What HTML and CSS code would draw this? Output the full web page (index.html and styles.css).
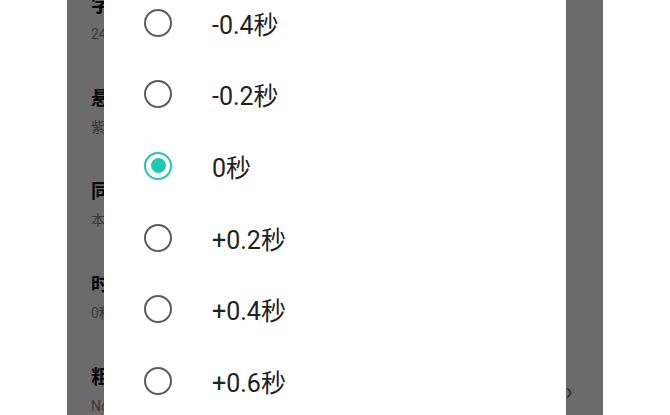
FILE: index.html
```html
<!DOCTYPE html>
<html lang="zh-CN">
<head>
    <meta charset="UTF-8">
    <meta name="viewport" content="width=device-width, initial-scale=1.0">
    <title>字幕设置</title>
    <link rel="stylesheet" href="styles.css">
</head>
<body>
    <div class="phone">
        <!-- settings list behind the dialog -->
        <ul class="settings">
            <li class="setting">
                <div class="setting-text">
                    <span class="setting-title">字幕大小</span>
                    <span class="setting-sub">24</span>
                </div>
            </li>
            <li class="setting">
                <div class="setting-text">
                    <span class="setting-title">悬浮字幕颜色</span>
                    <span class="setting-sub">紫色</span>
                </div>
            </li>
            <li class="setting">
                <div class="setting-text">
                    <span class="setting-title">同步字幕</span>
                    <span class="setting-sub">本地字幕</span>
                </div>
            </li>
            <li class="setting">
                <div class="setting-text">
                    <span class="setting-title">时间偏移</span>
                    <span class="setting-sub">0秒</span>
                </div>
            </li>
            <li class="setting">
                <div class="setting-text">
                    <span class="setting-title">粗体</span>
                    <span class="setting-sub">None</span>
                </div>
                <span class="chevron">&rsaquo;</span>
            </li>
        </ul>

        <div class="overlay"></div>

        <!-- offset picker -->
        <div class="dialog">
            <ul class="options">
                <li class="option"><span class="radio"></span><span class="option-label">-0.4秒</span></li>
                <li class="option"><span class="radio"></span><span class="option-label">-0.2秒</span></li>
                <li class="option"><span class="radio checked"></span><span class="option-label">0秒</span></li>
                <li class="option"><span class="radio"></span><span class="option-label">+0.2秒</span></li>
                <li class="option"><span class="radio"></span><span class="option-label">+0.4秒</span></li>
                <li class="option"><span class="radio"></span><span class="option-label">+0.6秒</span></li>
            </ul>
        </div>
    </div>
</body>
</html>
```

FILE: styles.css
```css
body {
    margin: 0;
    background-color: #fff;
    font-family: Roboto, "Noto Sans CJK SC", sans-serif;
}

.phone {
    position: relative;
    width: 536px;
    height: 415px;
    margin: 0 auto;
    overflow: hidden;
    background-color: #fff;
}

/* Settings list */
.settings {
    list-style: none;
    margin: -28px 0 0;
    padding: 0;
}

.setting {
    display: flex;
    align-items: center;
    height: 93px;
    padding: 0 30px 0 24px;
}

.setting-text {
    display: flex;
    flex-direction: column;
    gap: 7px;
    flex: 1;
}

.setting-title {
    font-size: 19px;
    line-height: 24px;
    font-weight: bold;
    color: #111;
}

.setting-sub {
    font-size: 14px;
    line-height: 18px;
    color: #888;
}

.chevron {
    font-size: 26px;
    color: #777;
}

.overlay {
    position: absolute;
    inset: 0;
    background-color: rgba(0, 0, 0, 0.58);
}

/* Dialog */
.dialog {
    position: absolute;
    top: -40px;
    bottom: -40px;
    left: 37px;
    right: 37px;
    background-color: #fff;
}

.options {
    list-style: none;
    margin: 0;
    padding: 27px 0 0;
}

.option {
    display: flex;
    align-items: center;
    height: 71.6px;
    padding-left: 40px;
}

.radio {
    width: 24px;
    height: 24px;
    border: 2px solid #5c5c5c;
    border-radius: 50%;
    display: flex;
    align-items: center;
    justify-content: center;
}

.radio.checked {
    border-color: #22c7b2;
}

.radio.checked::after {
    content: "";
    width: 15px;
    height: 15px;
    border-radius: 50%;
    background-color: #22c7b2;
}

.option-label {
    margin-left: 40px;
    font-size: 25px;
    color: #222;
}
```
